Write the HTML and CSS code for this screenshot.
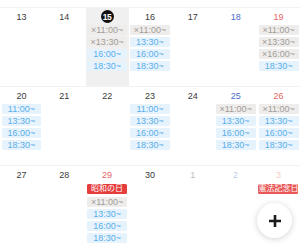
FILE: index.html
```html
<!DOCTYPE html>
<html lang="ja">
<head>
<meta charset="utf-8">
<link rel="stylesheet" href="styles.css">
</head>
<body>
<div class="cal">
  <div class="week">
    <div class="day"><div class="num">13</div></div>
    <div class="day"><div class="num">14</div></div>
    <div class="day today"><div class="num"><span class="circle">15</span></div>
      <div class="slot ng">×11:00~</div>
      <div class="slot ng">×13:30~</div>
      <div class="slot ok">16:00~</div>
      <div class="slot ok">18:30~</div>
    </div>
    <div class="day"><div class="num">16</div>
      <div class="slot ng">×11:00~</div>
      <div class="slot ok">13:30~</div>
      <div class="slot ok">16:00~</div>
      <div class="slot ok">18:30~</div>
    </div>
    <div class="day"><div class="num">17</div></div>
    <div class="day sat"><div class="num">18</div></div>
    <div class="day sun"><div class="num">19</div>
      <div class="slot ng">×11:00~</div>
      <div class="slot ng">×13:30~</div>
      <div class="slot ng">×16:00~</div>
      <div class="slot ok">18:30~</div>
    </div>
  </div>
  <div class="week">
    <div class="day"><div class="num">20</div>
      <div class="slot ok">11:00~</div>
      <div class="slot ok">13:30~</div>
      <div class="slot ok">16:00~</div>
      <div class="slot ok">18:30~</div>
    </div>
    <div class="day"><div class="num">21</div></div>
    <div class="day"><div class="num">22</div></div>
    <div class="day"><div class="num">23</div>
      <div class="slot ok">11:00~</div>
      <div class="slot ok">13:30~</div>
      <div class="slot ok">16:00~</div>
      <div class="slot ok">18:30~</div>
    </div>
    <div class="day"><div class="num">24</div></div>
    <div class="day sat"><div class="num">25</div>
      <div class="slot ng">×11:00~</div>
      <div class="slot ok">13:30~</div>
      <div class="slot ok">16:00~</div>
      <div class="slot ok">18:30~</div>
    </div>
    <div class="day sun"><div class="num">26</div>
      <div class="slot ng">×11:00~</div>
      <div class="slot ok">13:30~</div>
      <div class="slot ok">16:00~</div>
      <div class="slot ok">18:30~</div>
    </div>
  </div>
  <div class="week">
    <div class="day"><div class="num">27</div></div>
    <div class="day"><div class="num">28</div></div>
    <div class="day sun"><div class="num">29</div>
      <div class="holiday">昭和の日</div>
      <div class="slot ng">×11:00~</div>
      <div class="slot ok">13:30~</div>
      <div class="slot ok">16:00~</div>
      <div class="slot ok">18:30~</div>
    </div>
    <div class="day"><div class="num">30</div></div>
    <div class="day other"><div class="num">1</div></div>
    <div class="day other sat"><div class="num">2</div></div>
    <div class="day other sun"><div class="num">3</div>
      <div class="holiday">憲法記念日</div>
    </div>
  </div>
</div>
<button class="fab" aria-label="追加">
  <svg width="14" height="14" viewBox="0 0 14 14"><path d="M7 1v12M1 7h12" stroke="#1a1a1a" stroke-width="2.6" stroke-linecap="butt"/></svg>
</button>
</body>
</html>
```

FILE: styles.css
```css
html, body {
  margin: 0;
  padding: 0;
  background: #fff;
  width: 300px;
  height: 245px;
  overflow: hidden;
  font-family: "Liberation Sans", "Noto Sans CJK JP", sans-serif;
}
.cal {
  padding-top: 7px;
}
.week {
  display: grid;
  grid-template-columns: repeat(7, 1fr);
  height: 78px;
  border-top: 1px solid #f2f2f2;
}
.day {
  display: flex;
  flex-direction: column;
  align-items: center;
  padding: 0 1.5px;
  color: #3a3a3a;
}
.today {
  background: #f0f0f0;
}
.num {
  height: 17px;
  display: flex;
  align-items: center;
  justify-content: center;
  font-size: 9px;
}
.circle {
  width: 13px;
  height: 13px;
  border-radius: 50%;
  background: #111;
  color: #fff;
  font-weight: bold;
  font-size: 8.5px;
  display: flex;
  align-items: center;
  justify-content: center;
  letter-spacing: -0.3px;
}
.sat .num { color: #4a6cc9; }
.sun .num { color: #e06666; }
.other .num { opacity: 0.35; }
.other .holiday { opacity: 0.85; }
.slot {
  align-self: stretch;
  height: 10px;
  line-height: 10px;
  margin-bottom: 2px;
  font-size: 9px;
  text-align: center;
  border-radius: 1px;
  white-space: nowrap;
}
.ok {
  background: #e6f3fd;
  color: #5aaeea;
}
.ng {
  background: #efedeb;
  color: #a19c98;
}
.holiday {
  align-self: stretch;
  height: 10px;
  line-height: 10px;
  margin-top: 1px;
  margin-bottom: 3px;
  font-size: 8px;
  text-align: center;
  background: #e53c3c;
  color: #fff;
  border-radius: 1.5px;
  white-space: nowrap;
  overflow: hidden;
}
.fab {
  position: fixed;
  left: 257px;
  top: 203px;
  width: 35px;
  height: 35px;
  border-radius: 50%;
  border: none;
  background: #fff;
  box-shadow: 0 1px 6px rgba(0,0,0,0.18);
  display: flex;
  align-items: center;
  justify-content: center;
  padding: 0;
}
```
